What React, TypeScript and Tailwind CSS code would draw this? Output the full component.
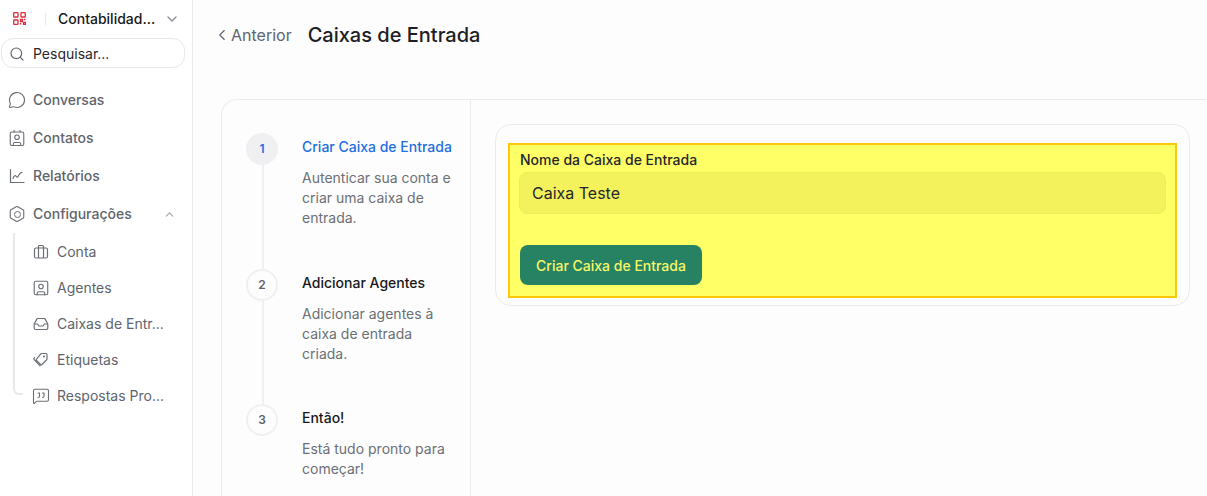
import { ChevronDown, ChevronLeft, ChevronUp, Contact, Hexagon, MessageCircle, MessageSquareQuote, Search, SquareUser } from 'lucide-react';
import type { ReactNode } from 'react';

function QrLogo() {
  return (
    <svg width="13" height="13" viewBox="0 0 13 13" fill="none" stroke="#dc2f3c" strokeWidth="1.3">
      <rect x="0.7" y="0.7" width="4.3" height="4.3" rx="0.6" />
      <rect x="8" y="0.7" width="4.3" height="4.3" rx="0.6" />
      <rect x="0.7" y="8" width="4.3" height="4.3" rx="0.6" />
      <path d="M7.5 7.5h2v2h-2zM10.5 10.5h2v2h-2zM11 7.5h1.5M7.5 11v1.5" />
    </svg>
  );
}

function SettingsHex() {
  return (
    <span className="relative flex h-[18px] w-[18px] items-center justify-center">
      <Hexagon size={18} strokeWidth={1.5} />
      <span className="absolute h-[7px] w-[7px] rounded-full border-[1.5px] border-[#6b6f76]" />
    </span>
  );
}

function ChartIcon() {
  return (
    <svg width="18" height="18" viewBox="0 0 18 18" fill="none" stroke="currentColor" strokeWidth="1.2" strokeLinecap="round" strokeLinejoin="round">
      <path d="M2.500 2.500v13h13.500" />
      <path d="M5 11.500c1-2.600 2-3.600 3-2.400s1.600 1.600 2.600-.6 2-3 3.400-3.200" />
    </svg>
  );
}

function CaseIcon() {
  return (
    <svg width="18" height="18" viewBox="0 0 18 18" fill="none" stroke="currentColor" strokeWidth="1.2" strokeLinejoin="round">
      <rect x="2.500" y="5" width="13" height="10" rx="1.500" />
      <path d="M6.500 15V3.500a1 1 0 0 1 1-1h3a1 1 0 0 1 1 1V15" />
    </svg>
  );
}

function TrayIcon() {
  return (
    <svg width="18" height="18" viewBox="0 0 18 18" fill="none" stroke="currentColor" strokeWidth="1.2" strokeLinejoin="round">
      <path d="M2.200 9 4.800 4.100A1.200 1.200 0 0 1 5.800 3.500h6.400a1.200 1.200 0 0 1 1 .6L15.800 9v4a1.500 1.500 0 0 1-1.500 1.500H3.700A1.500 1.500 0 0 1 2.200 13z" />
      <path d="M2.200 9h3.300l1.500 2h4l1.500-2h3.300" />
    </svg>
  );
}

function TagsIcon() {
  return (
    <svg width="18" height="18" viewBox="0 0 18 18" fill="none" stroke="currentColor" strokeWidth="1.2" strokeLinecap="round" strokeLinejoin="round">
      <path d="M9.500 2.500h4.500a1 1 0 0 1 1 1V8a1 1 0 0 1-.3.7l-4.800 4.800a1 1 0 0 1-1.400 0L4.500 9.500a1 1 0 0 1 0-1.400l4.300-5.300a1 1 0 0 1 .7-.3z" />
      <circle cx="12" cy="5.500" r="0.5" />
      <path d="M2.600 6.500l-.5.7a1 1 0 0 0 0 1.300l6 6.300" />
    </svg>
  );
}

function NavItem({ icon, label }: { icon: ReactNode; label: string }) {
  return (
    <div className="flex h-[38px] items-center gap-[7px] pl-2 text-sm font-medium text-[#60646c]">
      <span className="flex w-[18px] justify-center text-[#6b6f76]">{icon}</span>
      {label}
    </div>
  );
}

function SubItem({ icon, label }: { icon: ReactNode; label: string }) {
  return (
    <div className="flex h-9 items-center gap-[7px] text-sm text-[#60646c]">
      <span className="flex w-[18px] justify-center text-[#6b6f76]">{icon}</span>
      {label}
    </div>
  );
}

function Step({ n, title, text, active, height }: { n: number; title: string; text: string; active?: boolean; height: string }) {
  return (
    <div className={`flex gap-6 ${height}`}>
      <div className="flex w-8 flex-col items-center">
        <div
          className={
            active
              ? 'flex h-8 w-8 shrink-0 items-center justify-center rounded-full bg-[#f0f0f3] text-xs font-semibold text-[#1f6fe0]'
              : 'flex h-8 w-8 shrink-0 items-center justify-center rounded-full border-2 border-[#f0f0f0] text-xs font-semibold text-[#60646c]'
          }
        >
          {n}
        </div>
        {n < 3 && <div className="ml-0.5 w-0.5 flex-1 bg-[#f0f0f0]" />}
      </div>
      <div className="w-[152px] pt-1">
        <p className={active ? 'text-sm font-medium text-[#1f6fe0]' : 'text-sm font-medium text-[#18181b]'}>{title}</p>
        <p className="mt-[11px] text-sm leading-5 text-[#6b6f76]">{text}</p>
      </div>
    </div>
  );
}

export default function App() {
  return (
    <div className="flex h-[496px] w-[1207px] overflow-hidden bg-[#fdfdfd] font-['Inter',sans-serif]">
      <aside className="w-[193px] shrink-0 border-r border-[#ebebeb] bg-white">
        <div className="flex h-[37px] items-center pl-[13px]">
          <QrLogo />
          <span className="ml-[19px] h-3 w-px bg-[#e8e8e8]" />
          <span className="ml-3 w-[106px] text-sm font-medium text-[#18181b]">Contabilidad...</span>
          <ChevronDown size={16} className="text-[#8a8f98]" />
        </div>
        <div className="ml-px mt-px flex h-[30px] w-[184px] items-center gap-2 rounded-xl border border-[#e8e8e8] pl-[7px] pt-px text-sm text-[#27272a]">
          <Search size={16} strokeWidth={1.75} className="shrink-0 text-[#60646c]" />
          Pesquisar...
        </div>
        <div className="mt-[13px]">
          <NavItem icon={<MessageCircle size={18} strokeWidth={1.5} />} label="Conversas" />
          <NavItem icon={<Contact size={18} strokeWidth={1.5} />} label="Contatos" />
          <NavItem icon={<ChartIcon />} label="Relatórios" />
          <div className="flex items-center pr-[16px]">
            <div className="flex-1"><NavItem icon={<SettingsHex />} label="Configurações" /></div>
            <ChevronUp size={13} className="text-[#a0a4ab]" />
          </div>
        </div>
        <div className="relative pl-8 pt-px">
          <div className="absolute left-[13px] top-0 h-[162px] w-[10px] rounded-bl-md border-b-2 border-l-2 border-[#e8e8ea]" />
          <SubItem icon={<CaseIcon />} label="Conta" />
          <SubItem icon={<SquareUser size={18} strokeWidth={1.5} />} label="Agentes" />
          <SubItem icon={<TrayIcon />} label="Caixas de Entr..." />
          <SubItem icon={<TagsIcon />} label="Etiquetas" />
          <SubItem icon={<MessageSquareQuote size={18} strokeWidth={1.5} />} label="Respostas Pro..." />
        </div>
      </aside>
      <main className="min-w-0 flex-1">
        <header className="flex h-[70px] items-center pl-5">
          <ChevronLeft size={18} strokeWidth={1.5} className="text-[#60646c]" />
          <span className="text-base text-[#60646c]">Anterior</span>
          <h1 className="ml-4 text-xl font-medium text-[#1c2024]">Caixas de Entrada</h1>
        </header>
        <div className="ml-7 mt-[29px] mr-px flex h-[420px] rounded-tl-2xl border-l border-t border-[#ebebeb]">
          <div className="w-[249px] shrink-0 border-r border-[#ebebeb] pl-6 pt-[33px]">
            <Step n={1} active height="h-[136px]" title="Criar Caixa de Entrada" text="Autenticar sua conta e criar uma caixa de entrada." />
            <Step n={2} height="h-[135px]" title="Adicionar Agentes" text="Adicionar agentes à caixa de entrada criada." />
            <Step n={3} height="h-[101px]" title="Então!" text="Está tudo pronto para começar!" />
          </div>
          <div className="flex-1 pl-6 pr-4 pt-6">
            <div className="h-[182px] rounded-2xl border border-[#ebebeb] px-3 pt-[18px]">
              <div className="h-[155px] border-2 border-[#fdc70c] bg-[#ffff66] px-[9px]">
                <label className="block pl-px pt-[5px] text-sm font-medium leading-5 text-[#27272a]">Nome da Caixa de Entrada</label>
                <div className="mt-0.5 flex h-[42px] items-center rounded-lg border border-[#eded5c] bg-[#f3f25d] pl-3 text-base text-[#27272a]">Caixa Teste</div>
                <button className="ml-px mt-[31px] h-10 w-[182px] rounded-lg bg-[#268263] pt-px text-sm font-medium text-[#f7f76a]">Criar Caixa de Entrada</button>
              </div>
            </div>
          </div>
        </div>
      </main>
    </div>
  );
}
